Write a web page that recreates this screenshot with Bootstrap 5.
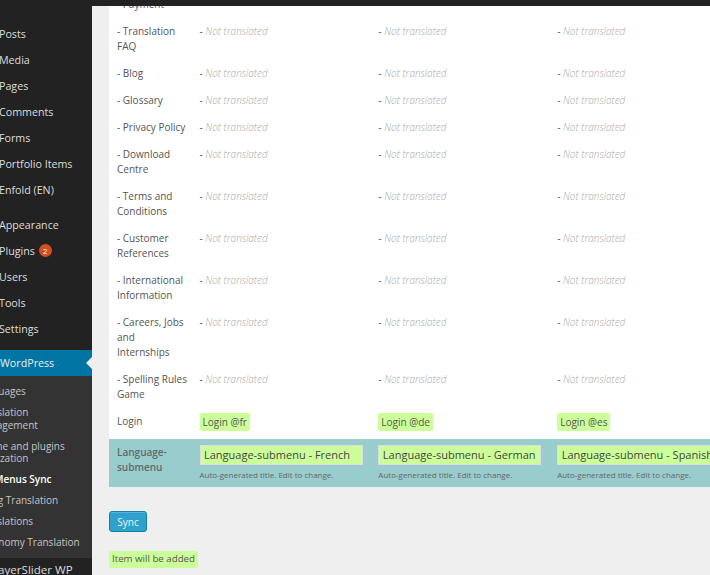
<!DOCTYPE html>
<html lang="en">
<head>
<meta charset="utf-8">
<title>WP Menus Sync</title>
<link href="https://cdn.jsdelivr.net/npm/bootstrap@5.3.0/dist/css/bootstrap.min.css" rel="stylesheet">
<style>
html,body{height:575px;overflow:hidden;}
body{background:#efefef;font-family:"Open Sans",sans-serif;font-size:10px;color:#555;width:710px;}
.topbar{height:6px;background:#222;}
.shell{height:569px;overflow:hidden;}
.side{width:92px;flex:none;background:#222;overflow:hidden;color:#ddd;font-size:10.7px;}
.side-list{list-style:none;margin:0;padding:15px 0 0;}
.side-list>li{height:26px;line-height:26px;padding-left:0;margin-left:-1px;white-space:nowrap;}
.side-gap{margin-top:9px;}
.side-list>li.side-on{background:#0074a2;color:#eee;margin-left:0;position:relative;margin-top:8px;padding-left:0;}
.side-on::after{content:"";position:absolute;right:0;top:7px;border:6px solid transparent;border-right-color:#efefef;border-left:0;}
.side-bubble{display:inline-block;width:13px;height:13px;border-radius:50%;background:#d54e21;color:#fff;font-size:8px;line-height:13px;text-align:center;margin-left:1px;vertical-align:1px;}
.side-list>li.side-sub{height:auto;line-height:12.5px;background:#333;margin-left:0;padding:6px 0 5px;color:#c4c4c4;font-size:10px;white-space:normal;}
.side-sub ul{list-style:none;margin:0 0 0 -24px;padding:0;width:116px;}
.side-sub li{padding:3.4px 0 5px;}
.side-sub .side-cur{color:#fff;font-weight:600;}
.side-list>li.side-last{margin-left:0;padding-left:0;font-size:11.6px;height:20px;line-height:24px;text-indent:-8px;}
.main{flex:1 1 auto;padding:0 0 0 17px;min-width:0;overflow:hidden;}
.sync-table{width:619px;table-layout:fixed;margin:-15.5px 0 0;background:#fff;--bs-table-bg:transparent;--bs-table-color:#555;font-size:10px;line-height:15px;}
.sync-table>tbody>tr>td{padding:6px 3px 6px 8px;vertical-align:top;background:transparent;box-shadow:none;border:0;color:inherit;}
.sync-table td.nt{padding-left:8px;padding-right:0;}
.col-first{width:82.5px;}
.nt em{color:#aaa;font-style:italic;font-weight:300;}
.nt{color:#999;}
.sync-table>tbody>tr.row-login>td.nt{padding-top:5.5px;padding-bottom:7.5px;}
.chip{display:block;width:max-content;background:#cf9;border-radius:2px;padding:2px 3px;color:#555;line-height:14px;font-size:10px;}
.row-lang{background:#9cc;}
.sync-table>tbody>tr.row-lang>td{padding-bottom:7px;}
.lang-name{font-weight:600;font-size:10px;color:#5f6b6b;display:block;}
.lang-input{display:block;width:163px;height:20px;padding:0 3.5px;border:1px solid #ddd;background:#cf9;border-radius:0;font-family:"Open Sans",sans-serif;font-size:11px;color:#444;outline:0;box-shadow:none;}
.lang-hint{display:block;font-size:8px;line-height:10px;margin-top:5px;color:#666;white-space:nowrap;}
.btn-sync{display:block;background:#2ea2cc;border:1px solid #1b7fa6;border-radius:3px;color:#eaf6fb;font-size:10px;line-height:14px;padding:3px 7px;width:38px;height:21px;margin-top:24px;box-shadow:inset 0 1px 0 rgba(120,200,230,.5);}
.btn-sync:hover{background:#2ea2cc;color:#eaf6fb;}
.added-note{display:table;background:#cf9;border-radius:2px;padding:1.5px 3px;margin-top:19px;line-height:14px;color:#555;font-size:9.7px;}
</style>
</head>
<body>
<div class="topbar"></div>
<div class="shell d-flex">
<nav class="side">
<ul class="side-list">
<li>Posts</li><li>Media</li><li>Pages</li><li>Comments</li><li>Forms</li><li>Portfolio Items</li><li>Enfold (EN)</li>
<li class="side-gap">Appearance</li><li>Plugins <span class="side-bubble">2</span></li><li>Users</li><li>Tools</li><li>Settings</li>
<li class="side-on">WordPress</li>
<li class="side-sub"><ul>
<li>Languages</li><li>Translation Management</li><li>Theme and plugins localization</li><li class="side-cur">WP Menus Sync</li><li>String Translation</li><li>Translations</li><li>Taxonomy Translation</li>
</ul></li>
<li class="side-last">LayerSlider WP</li>
</ul>
</nav>
<main class="main">
<table class="table table-borderless sync-table">
<colgroup><col class="col-first"><col><col><col></colgroup>
<tbody>
<tr><td>- Payment</td><td class="nt"></td><td class="nt"></td><td class="nt"></td></tr>
<tr><td>- Translation FAQ</td><td class="nt">- <em>Not translated</em></td><td class="nt">- <em>Not translated</em></td><td class="nt">- <em>Not translated</em></td></tr>
<tr><td>- Blog</td><td class="nt">- <em>Not translated</em></td><td class="nt">- <em>Not translated</em></td><td class="nt">- <em>Not translated</em></td></tr>
<tr><td>- Glossary</td><td class="nt">- <em>Not translated</em></td><td class="nt">- <em>Not translated</em></td><td class="nt">- <em>Not translated</em></td></tr>
<tr><td>- Privacy Policy</td><td class="nt">- <em>Not translated</em></td><td class="nt">- <em>Not translated</em></td><td class="nt">- <em>Not translated</em></td></tr>
<tr><td>- Download Centre</td><td class="nt">- <em>Not translated</em></td><td class="nt">- <em>Not translated</em></td><td class="nt">- <em>Not translated</em></td></tr>
<tr><td>- Terms and Conditions</td><td class="nt">- <em>Not translated</em></td><td class="nt">- <em>Not translated</em></td><td class="nt">- <em>Not translated</em></td></tr>
<tr><td>- Customer References</td><td class="nt">- <em>Not translated</em></td><td class="nt">- <em>Not translated</em></td><td class="nt">- <em>Not translated</em></td></tr>
<tr><td>- International Information</td><td class="nt">- <em>Not translated</em></td><td class="nt">- <em>Not translated</em></td><td class="nt">- <em>Not translated</em></td></tr>
<tr><td>- Careers, Jobs and Internships</td><td class="nt">- <em>Not translated</em></td><td class="nt">- <em>Not translated</em></td><td class="nt">- <em>Not translated</em></td></tr>
<tr><td>- Spelling Rules Game</td><td class="nt">- <em>Not translated</em></td><td class="nt">- <em>Not translated</em></td><td class="nt">- <em>Not translated</em></td></tr>
<tr class="row-login"><td>Login</td><td class="nt"><span class="chip">Login @fr</span></td><td class="nt"><span class="chip">Login @de</span></td><td class="nt"><span class="chip">Login @es</span></td></tr>
<tr class="row-lang"><td><span class="lang-name">Language-submenu</span></td>
<td class="nt"><input class="lang-input form-control" value="Language-submenu - French"><span class="lang-hint">Auto-generated title. Edit to change.</span></td>
<td class="nt"><input class="lang-input form-control" value="Language-submenu - German"><span class="lang-hint">Auto-generated title. Edit to change.</span></td>
<td class="nt"><input class="lang-input form-control" value="Language-submenu - Spanish"><span class="lang-hint">Auto-generated title. Edit to change.</span></td></tr>
</tbody>
</table>
<button type="button" class="btn btn-sync">Sync</button>
<div class="added-note">Item will be added</div>
</main>
</div>
</body>
</html>
